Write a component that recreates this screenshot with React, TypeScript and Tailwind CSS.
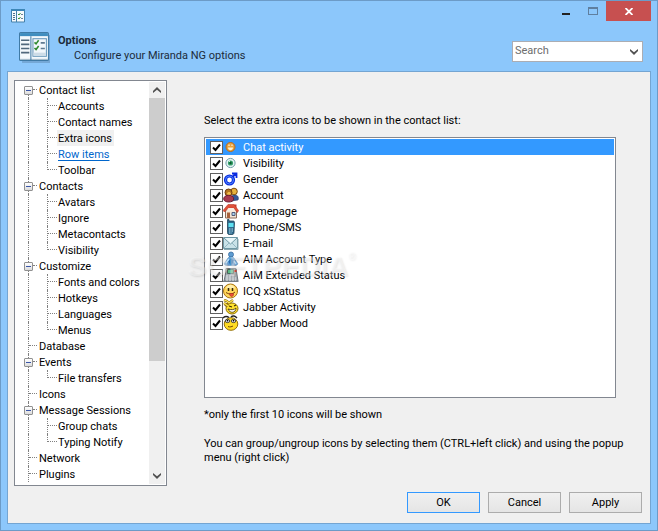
import { useState } from "react";
import type { ReactNode } from "react";
import clsx from "clsx";

type TreeNode = { label: string; children?: string[] };

const tree: TreeNode[] = [
  { label: "Contact list", children: ["Accounts", "Contact names", "Extra icons", "Row items", "Toolbar"] },
  { label: "Contacts", children: ["Avatars", "Ignore", "Metacontacts", "Visibility"] },
  { label: "Customize", children: ["Fonts and colors", "Hotkeys", "Languages", "Menus"] },
  { label: "Database" },
  { label: "Events", children: ["File transfers"] },
  { label: "Icons" },
  { label: "Message Sessions", children: ["Group chats", "Typing Notify"] },
  { label: "Network" },
  { label: "Plugins" },
];

function Icon({ children }: { children: ReactNode }) {
  return (
    <svg viewBox="0 0 16 16" className="size-4 shrink-0" aria-hidden="true">
      {children}
    </svg>
  );
}

const extraIcons: { label: string; icon: ReactNode }[] = [
  {
    label: "Chat activity",
    icon: (
      <Icon>
        <circle cx="7.5" cy="8" r="4.5" fill="#e8a33c" stroke="#b86a1c" />
        <path d="M5 8.500h5c0 3.500-5 3.500-5 0z" fill="#fff3d0" />
        <path d="M6 5.500v1.500M9 5.500v1.500" stroke="#fff" />
      </Icon>
    ),
  },
  {
    label: "Visibility",
    icon: (
      <Icon>
        <circle cx="7.5" cy="8" r="4.6" fill="#e6f5f5" stroke="#6f9ea6" />
        <circle cx="7.5" cy="8" r="2.6" fill="#35a06a" />
        <circle cx="7.5" cy="8" r="1.2" fill="#0b5a2e" />
        <path d="M6 6.5h1" stroke="#c8ffd8" />
      </Icon>
    ),
  },
  {
    label: "Gender",
    icon: (
      <Icon>
        <circle cx="6.5" cy="9" r="4" fill="none" stroke="#0a2be0" strokeWidth="3.200" />
        <circle cx="6.5" cy="9" r="4" fill="none" stroke="#4f8bff" strokeWidth="1" />
        <path d="M9.5 6L13 2.500M9 2.500h4.500V7" fill="none" stroke="#0a2be0" strokeWidth="1.800" />
      </Icon>
    ),
  },
  {
    label: "Account",
    icon: (
      <Icon>
        <path d="M8 14c0-5 1-6 4-6s4 3 3 5z" fill="#35589a" stroke="#22376b" strokeWidth=".6" />
        <circle cx="11" cy="4.5" r="3.3" fill="#e8b23c" stroke="#7c4a12" />
        <circle cx="5.5" cy="5.5" r="3.5" fill="#b5761f" stroke="#6e3c10" />
        <path d="M4 6.500c1-2 3-2 4 0-.5 2.400-3.500 2.400-4 0z" fill="#f2c14e" />
        <path d="M.7 12c0-5 10-5 10 0 0 4-10 4-10 0z" fill="#a63a50" stroke="#6d1a30" />
      </Icon>
    ),
  },
  {
    label: "Homepage",
    icon: (
      <Icon>
        <path d="M2.500 7h11v8h-11z" fill="#f3e6d6" stroke="#8a6a5a" />
        <path d="M11 1.500h2.500v4H11z" fill="#c9412c" />
        <path d="M0 7.500L5 1.500h6l4.500 6-1 2L10.500 5h-5L1.500 9z" fill="#e0503a" stroke="#b53a28" strokeWidth=".6" />
        <path d="M5.500 5h5l2.500 3.500H3z" fill="#f7ece0" />
        <path d="M4 9.500h3V15H4z" fill="#a8623c" />
        <path d="M9 9.500h3v3H9z" fill="#a9d4f2" stroke="#545e7c" />
      </Icon>
    ),
  },
  {
    label: "Phone/SMS",
    icon: (
      <Icon>
        <path d="M4.500 3V.5h1.500V2h4c1 0 1.500.5 1.500 1.500L11 13c0 1.500-.5 2.500-1.500 2.500H6c-1 0-1.500-1-1.500-2z" fill="#2f6b8e" stroke="#1d4359" strokeWidth=".8" />
        <path d="M5.500 4h5v4h-5z" fill="#5fe0f0" />
        <path d="M6 10h4M6 12h4M6 14h3" stroke="#b8dfee" strokeDasharray="1 .5" />
      </Icon>
    ),
  },
  {
    label: "E-mail",
    icon: (
      <Icon>
        <path d="M.5 2.500h14v11H.5z" fill="#c9e2e8" stroke="#6e97a4" />
        <path d="M1 3l6.500 6L14 3" fill="#eaf7fa" stroke="#7199a5" />
        <path d="M1 13l5-5M14 13L9 8" stroke="#94b7c2" />
        <path d="M1 14.500h14V4" fill="none" stroke="#8ca9b1" />
      </Icon>
    ),
  },
  {
    label: "AIM Account Type",
    icon: (
      <Icon>
        <path d="M8 4l3 3 4 6-2 1.500H3L1 13l4-6z" fill="#5f9fd8" stroke="#7398b9" strokeWidth=".7" />
        <circle cx="8" cy="3.500" r="2.500" fill="#5e9cd1" stroke="#386c9f" strokeWidth=".8" />
        <path d="M5 10l3-3 3 3-3 5z" fill="#276cae" />
        <path d="M3 12l3-4M13 13l-2-3" stroke="#b8e1fa" strokeWidth="1.500" />
      </Icon>
    ),
  },
  {
    label: "AIM Extended Status",
    icon: (
      <Icon>
        <path d="M2.500 7L3 1.500h10L15 14H1z" fill="#a8afb5" stroke="#6c747b" />
        <path d="M4.500 2.500h6v4h-6z" fill="#5fbc86" stroke="#49675b" />
        <path d="M11.500 4h2" stroke="#d7443a" strokeWidth="2" />
        <path d="M3 9h9M3 11h10M3 13h10" stroke="#e2e6e9" strokeDasharray="2 1" />
        <path d="M0 14.500h15.500" stroke="#767e85" />
      </Icon>
    ),
  },
  {
    label: "ICQ xStatus",
    icon: (
      <Icon>
        <circle cx="7.500" cy="8" r="7" fill="#ffd65a" stroke="#a87311" />
        <path d="M3 5.500c1-5 8-5 9 0z" fill="#ffefad" />
        <path d="M5.500 5v3M9.500 5v3" stroke="#33260c" strokeWidth="1.500" />
        <path d="M3 9.500c3 2 6 2 9-.5" fill="none" stroke="#74410d" />
        <path d="M6.500 10.500h4c.5 4-4 4-4 0z" fill="#ef4e38" stroke="#9f281a" strokeWidth=".6" />
      </Icon>
    ),
  },
  {
    label: "Jabber Activity",
    icon: (
      <Icon>
        <ellipse cx="9" cy="9.500" rx="6" ry="5.500" fill="#ffe22e" stroke="#8e6c08" />
        <path d="M1 1l3 1 2 2 4-3M1 4l4 3M5 4L2 7" fill="none" stroke="#8e6c08" strokeWidth="2.400" />
        <path d="M1 1l3 1 2 2 4-3M1 4l4 3" fill="none" stroke="#ffe853" strokeWidth="1.300" />
        <path d="M6 7l3 1M11 7l2-1" stroke="#3d2c04" strokeWidth="1.200" />
        <path d="M5 10c3 1 6 1 8-1 0 5-6 6-8 1z" fill="#fff" stroke="#3d2c04" strokeWidth=".8" />
      </Icon>
    ),
  },
  {
    label: "Jabber Mood",
    icon: (
      <Icon>
        <ellipse cx="8" cy="9" rx="6.800" ry="6.300" fill="#ffdc22" stroke="#94700a" />
        <ellipse cx="4.500" cy="6" rx="2.300" ry="1.600" fill="#fff" stroke="#222" strokeWidth=".8" />
        <ellipse cx="10.500" cy="6" rx="2.300" ry="1.600" fill="#fff" stroke="#222" strokeWidth=".8" />
        <path d="M0 3c2-2 4-2 6-.5M8 2c2-2 4-1 6 1" fill="none" stroke="#222" strokeWidth="1.500" />
        <path d="M4.500 5v1.500M10.500 5v1.500" stroke="#000" strokeWidth="1.500" />
        <path d="M5 11.500c2 1 4 0 5-.5" fill="none" stroke="#70440a" />
      </Icon>
    ),
  },
];

function OptionsLogo({ className }: { className: string }) {
  return (
    <svg viewBox="0 0 30 30" className={className} aria-hidden="true">
      <path d="M2 3h28v27H3z" fill="#4b6f91" opacity=".35" />
      <rect x=".5" y=".5" width="28" height="27" rx="1" fill="#f4f9fc" stroke="#3f7aa6" />
      <path d="M1 1h27v3H1z" fill="#3f8dbf" />
      <path d="M1 26.500h27" stroke="#9db6c7" />
      <path d="M11.500 4v23" stroke="#3f7aa6" />
      <path d="M2 8h8M2 12h8M2 16h8M2 20h8" stroke="#50687c" strokeWidth="1.600" />
      <rect x="13.500" y="6.500" width="13" height="17" fill="#f2f7fb" stroke="#6595b8" />
      <path d="M14 20h12v3H14z" fill="#cddce7" />
      <path d="M15 10l1.500 1.500L19 8M15 15.500l1.500 1.500 2.500-3.500" fill="none" stroke="#2f8a2d" strokeWidth="1.500" />
      <path d="M21 10.500h4M21 16h4" stroke="#607b91" strokeWidth="1.600" />
    </svg>
  );
}

function SmallLogo() {
  return (
    <svg viewBox="0 0 14 14" className="h-3.5 w-3.5" aria-hidden="true">
      <path d="M.5 1h13v12H.5z" fill="#f6fafd" stroke="#4581aa" />
      <path d="M0 1h14" stroke="#3c86b7" strokeWidth="2" />
      <path d="M5.500 2v11" stroke="#4581aa" />
      <path d="M2 4.500h2M2 6.500h2M2 8.500h2M2 10.500h2" stroke="#53718b" />
      <path d="M7 5l1 1 1.500-2M7 9l1 1 1.500-2" fill="none" stroke="#3a9138" />
      <path d="M10 5.500h2M10 9.500h2" stroke="#6d8498" />
    </svg>
  );
}

function Chevron({ up }: { up?: boolean }) {
  return (
    <svg viewBox="0 0 8 6" className="h-1.5 w-2" aria-hidden="true">
      <path
        d={up ? "M0 6V4l4-4 4 4v2L4 2.800z" : "M0 0v2l4 4 4-4V0L4 3.200z"}
        fill="#505050"
      />
    </svg>
  );
}

const dots = "border-dotted border-[#808080]";

function TreeItem({ label, active, onSelect }: { label: string; active?: boolean; onSelect: () => void }) {
  const hot = label === "Row items";
  return (
    <a
      href="#"
      onClick={(e) => {
        e.preventDefault();
        onSelect();
      }}
      className={clsx(
        "h-4 whitespace-nowrap px-px leading-[18px]",
        active && "bg-[#f0f0f0] pr-0.5",
        hot && "text-[#0066cc] underline underline-offset-2"
      )}
    >
      {label}
    </a>
  );
}

function Tree() {
  const [selected, setSelected] = useState("Extra icons");
  const [closed, setClosed] = useState<string[]>([]);

  const toggle = (label: string) =>
    setClosed((c) => (c.includes(label) ? c.filter((l) => l !== label) : [...c, label]));

  return (
    <nav aria-label="Option pages" className="flex-1 overflow-hidden pt-px pl-[9px]">
      {tree.map((node, i) => (
        <div key={node.label}>
          <div className="flex h-4">
            {node.children ? (
              <>
                <div className="flex w-[9px] flex-col items-center">
                  <span className={clsx("flex-1 border-l", i === 0 ? "border-transparent" : dots)} />
                  <button
                    aria-label={`Toggle ${node.label}`}
                    onClick={() => toggle(node.label)}
                    className="flex size-[9px] items-center justify-center rounded-[1px] border border-[#919191] bg-gradient-to-b from-white to-[#dcdcdc]"
                  >
                    <span className="h-px w-[5px] bg-[#3a56a8]" />
                  </button>
                  <span className={clsx("flex-1 border-l", dots)} />
                </div>
                <span className={clsx("mr-px h-2 w-1 border-b", dots)} />
              </>
            ) : (
              <div className={clsx("mr-px ml-1 w-[9px] border-l", dots)}>
                <div className={clsx("h-2 border-b", dots)} />
              </div>
            )}
            <TreeItem label={node.label} active={selected === node.label} onSelect={() => setSelected(node.label)} />
          </div>
          {!closed.includes(node.label) &&
            node.children?.map((child, n) => (
              <div key={child} className={clsx("ml-1 flex h-4 border-l", dots)}>
                <div className={clsx("ml-[18px] w-2.5 border-l", n === node.children!.length - 1 && "h-2", dots)}>
                  <div className={clsx("h-2 w-[9px] border-b", dots)} />
                </div>
                <TreeItem label={child} active={selected === child} onSelect={() => setSelected(child)} />
              </div>
            ))}
        </div>
      ))}
    </nav>
  );
}

function DialogButton({ children, primary }: { children: ReactNode; primary?: boolean }) {
  return (
    <button
      className={clsx(
        "h-[21px] w-[73px] border bg-gradient-to-b from-[#f0f0f0] to-[#e5e5e5] leading-[19px]",
        primary ? "border-[#3399ff]" : "border-[#acacac]"
      )}
    >
      {children}
    </button>
  );
}

export default function App() {
  const [current, setCurrent] = useState("Chat activity");

  return (
    <div className="flex min-h-screen flex-col border border-[#6c9bc7] bg-[#8cc7fb] font-[Roboto,'Noto_Sans',sans-serif] text-[11px] text-black">
      {/* Title bar */}
      <div className="flex h-7 items-start justify-between pr-1.5 pl-2.5">
        <div className="pt-2">
          <SmallLogo />
        </div>
        <div className="flex">
          <button aria-label="Minimize" className="flex h-5 w-[27px] items-end justify-center pb-[6px]">
            <span className="h-0.5 w-2 bg-[#222]" />
          </button>
          <button aria-label="Maximize" className="flex h-5 w-[27px] items-center justify-center">
            <span className="h-2 w-2.5 border border-t-2 border-[#5f7f9f]" />
          </button>
          <button aria-label="Close" className="flex h-5 w-[45px] items-center justify-center bg-[#c75050]">
            <svg viewBox="0 0 8 7" className="h-[7px] w-2" aria-hidden="true">
              <path d="M.5 0l7 7M7.500 0l-7 7" stroke="#fff" strokeWidth="1.800" />
            </svg>
          </button>
        </div>
      </div>

      {/* Header */}
      <header className="flex h-[42px] items-start justify-between pr-3.5 pl-[18px]">
        <div className="flex gap-2">
          <OptionsLogo className="mt-[3px] size-[31px]" />
          <div className="pt-1 leading-[15px] text-[#1c2b3a]">
            <h1 className="font-bold">Options</h1>
            <p className="pl-4">Configure your Miranda NG options</p>
          </div>
        </div>
        <div className="mt-3 flex h-[21px] w-[131px] border border-[#abadb3] bg-white">
          <input
            aria-label="Search"
            placeholder="Search"
            className="min-w-0 flex-1 px-0.5 placeholder:text-[#6d6d6d] focus:outline-none"
          />
          <button aria-label="Show search history" className="flex w-4 items-center justify-center">
            <Chevron />
          </button>
        </div>
      </header>

      {/* Body */}
      <main className="mx-1.5 mb-1.5 flex flex-1 flex-col border border-[#74a5d2] bg-[#f0f0f0]">
        <div className="flex flex-1 pt-2 pl-1.5">
          <div className="flex w-[153px] shrink-0 border border-[#828790] bg-white pr-px">
            <Tree />
            <div className="my-px flex w-4 flex-col bg-[#f0f0f0]">
              <button aria-label="Scroll up" className="flex h-4 items-center justify-center">
                <Chevron up />
              </button>
              <div className="flex-1">
                <div className="h-[71%] bg-[#cdcdcd]" />
              </div>
              <button aria-label="Scroll down" className="flex h-4 items-center justify-center">
                <Chevron />
              </button>
            </div>
          </div>

          <section className="relative flex min-w-0 flex-1 flex-col pt-8 pr-[34px] pl-[37px]">
            <h2 className="leading-[18px]">Select the extra icons to be shown in the contact list:</h2>
            <ul className="mt-[7px] flex-1 border border-[#828790] bg-white p-px">
              {extraIcons.map(({ label, icon }) => (
                <li
                  key={label}
                  onClick={() => setCurrent(label)}
                  className={clsx("pl-1", current === label && "bg-[#3399ff] text-white")}
                >
                  <label className="flex h-4 items-center">
                    <span className="grid size-[13px] shrink-0">
                      <input
                        type="checkbox"
                        defaultChecked
                        className="peer col-start-1 row-start-1 size-[13px] appearance-none border border-[#606060] bg-white"
                      />
                      <svg
                        viewBox="0 0 13 13"
                        className="pointer-events-none invisible col-start-1 row-start-1 size-[13px] peer-checked:visible"
                        aria-hidden="true"
                      >
                        <path d="M3 6.500L5.500 9 10 3.500" fill="none" stroke="#000" strokeWidth="2" />
                      </svg>
                    </span>
                    {icon}
                    <span className="h-4 pl-1 leading-[18px]">{label}</span>
                  </label>
                </li>
              ))}
            </ul>
            <p className="mt-[9px] leading-4">*only the first 10 icons will be shown</p>
            <p className="-mr-4 mt-3.5 mb-[21px] leading-[14px]">
              You can group/ungroup icons by selecting them (CTRL+left click) and using the popup menu (right click)
            </p>
            <div
              aria-hidden="true"
              className="pointer-events-none absolute top-[171px] left-[21px] flex font-['Liberation_Sans',sans-serif] text-[28px] leading-8 font-bold text-white/40 [text-shadow:1px_1px_2px_rgba(0,0,0,0.1)]"
            >
              SOFTPEDIA<span className="text-[10px] leading-3">®</span>
            </div>
          </section>
        </div>

        <div className="flex justify-end gap-2 pt-1.5 pr-2 pb-2.5">
          <DialogButton primary>OK</DialogButton>
          <DialogButton>Cancel</DialogButton>
          <DialogButton>Apply</DialogButton>
        </div>
      </main>
    </div>
  );
}
